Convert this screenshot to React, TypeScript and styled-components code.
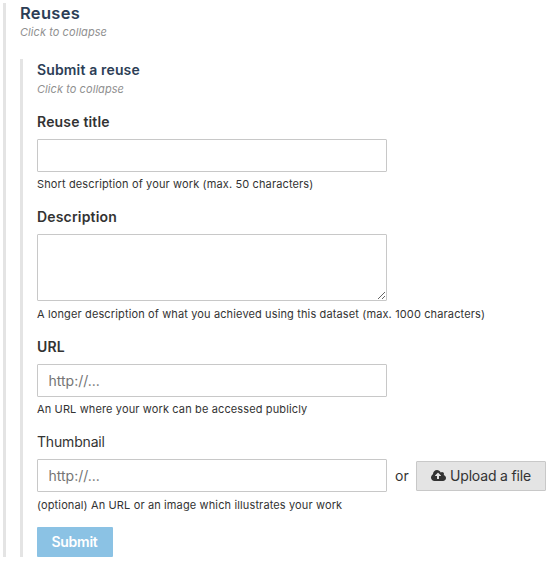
import React from "react";
import styled, { createGlobalStyle } from "styled-components";

const GlobalStyle = createGlobalStyle`
  * { box-sizing: border-box; }
  body { margin: 0; background: #fff; color: #333; font-family: Inter, "Liberation Sans", sans-serif; }
`;

const Page = styled.main`
  padding: 3px 0 0 3px;
  width: 551px;
  height: 561px;
  white-space: nowrap;
`;

const Section = styled.section`
  height: 554px;
  border-left: 3px solid #e4e4e4;
  padding-left: 14px;
`;

const SubSection = styled.section`
  margin-top: 17px;
  height: 498px;
  border-left: 3px solid #e4e4e4;
  padding-left: 14px;
`;

const Title = styled.h2`
  margin: 0;
  height: 21px;
  font-size: 16.5px;
  line-height: 21px;
  font-weight: 600;
  letter-spacing: 0.3px;
  color: #2c3e56;
`;

const SubTitle = styled.h3`
  margin: 0;
  font-size: 14px;
  line-height: 22px;
  font-weight: 600;
  letter-spacing: 0.15px;
  color: #2c3e56;
`;

const Hint = styled.p<{ $h: number }>`
  margin: 0;
  height: ${(p) => p.$h}px;
  line-height: 16px;
  font-size: 11px;
  font-style: italic;
  letter-spacing: 0.07px;
  color: #909090;
`;

const Field = styled.div`
  margin-bottom: 13px;
`;

const Label = styled.label<{ $plain?: boolean }>`
  display: block;
  margin-bottom: 5px;
  font-size: 14px;
  line-height: 24px;
  font-weight: ${(p) => (p.$plain ? 400 : 600)};
  letter-spacing: ${(p) => (p.$plain ? -0.17 : 0.18)}px;
`;

const Input = styled.input`
  display: block;
  width: 350px;
  height: 33px;
  padding: 0 11px 0 10.5px;
  border: 1px solid #c8c8c8;
  border-radius: 1px;
  outline: none;
  background: #fff;
  color: #333;
  font: 400 14px Inter, sans-serif;
  &::placeholder { color: #757575; opacity: 1; }
`;

const TextArea = styled.textarea`
  display: block;
  width: 350px;
  height: 67px;
  padding: 8px 11px;
  border: 1px solid #c8c8c8;
  border-radius: 1px;
  outline: none;
  resize: both;
  font: 400 14px Inter, sans-serif;
`;

const Help = styled.p<{ $gap?: number }>`
  margin: ${(p) => p.$gap ?? 4}px 0 0;
  font-size: 11px;
  line-height: 16px;
  letter-spacing: 0.132px;
`;

const UploadRow = styled.div`
  display: flex;
  align-items: center;
  font-size: 14px;
`;

const Or = styled.span`
  width: 29px;
  padding-left: 8px;
`;

const UploadButton = styled.button`
  display: flex;
  align-items: center;
  width: 130px;
  height: 30px;
  padding: 0 0 0 14px;
  gap: 4px;
  border: 1px solid #c8c8c8;
  border-radius: 1px;
  background: #e4e4e4;
  color: #333;
  font: 400 14px Inter, sans-serif;
  letter-spacing: -0.17px;
`;

const SubmitButton = styled.button`
  display: block;
  margin-top: 14px;
  width: 76px;
  height: 30px;
  padding: 0 1px 1px 0;
  border: 0;
  border-radius: 1px;
  background: #8bc2e4;
  color: #fff;
  font: 600 14px Inter, sans-serif;
  letter-spacing: -0.25px;
`;

const CloudUpload = () => (
  <svg width="15" height="11" viewBox="0 0 1920 1408" fill="currentColor" aria-hidden="true">
    <path
      fillRule="evenodd"
      d="M1280 736q0-14-9-23L919 361q-9-9-23-9t-23 9L522 712q-10 12-10 24 0 14 9 23t23 9h224v352q0 13 9.500 22.500t22.500 9.500h192q13 0 22.500-9.500t9.500-22.500V768h224q13 0 22.500-9.500t9.500-22.500zM1920 1024q0 159-112.500 271.500T1536 1408H448q-185 0-316.500-131.500T0 960q0-130 70-240t188-165q-2-30-2-43 0-212 150-362T768 0q156 0 285.500 87T1242 318q71-62 166-62 106 0 181 75t75 181q0 76-41 138 130 31 213.500 135.500T1920 1024z"
    />
  </svg>
);

export default function App() {
  return (
    <>
      <GlobalStyle />
      <Page>
        <Section>
          <Title>Reuses</Title>
          <Hint $h={18}>Click to collapse</Hint>
          <SubSection>
            <SubTitle>Submit a reuse</SubTitle>
            <Hint $h={29}>Click to collapse</Hint>
            <Field>
              <Label htmlFor="title">Reuse title</Label>
              <Input id="title" />
              <Help>Short description of your work (max. 50 characters)</Help>
            </Field>
            <Field>
              <Label htmlFor="description">Description</Label>
              <TextArea id="description" />
              <Help $gap={5}>
                A longer description of what you achieved using this dataset (max. 1000 characters)
              </Help>
            </Field>
            <Field>
              <Label htmlFor="url">URL</Label>
              <Input id="url" placeholder="http://..." />
              <Help>An URL where your work can be accessed publicly</Help>
            </Field>
            <Field>
              <Label htmlFor="thumbnail" $plain>Thumbnail</Label>
              <UploadRow>
                <Input id="thumbnail" placeholder="http://..." />
                <Or>or</Or>
                <UploadButton type="button">
                  <CloudUpload />
                  Upload a file
                </UploadButton>
              </UploadRow>
              <Help $gap={5}>(optional) An URL or an image which illustrates your work</Help>
            </Field>
            <SubmitButton type="button">Submit</SubmitButton>
          </SubSection>
        </Section>
      </Page>
    </>
  );
}
